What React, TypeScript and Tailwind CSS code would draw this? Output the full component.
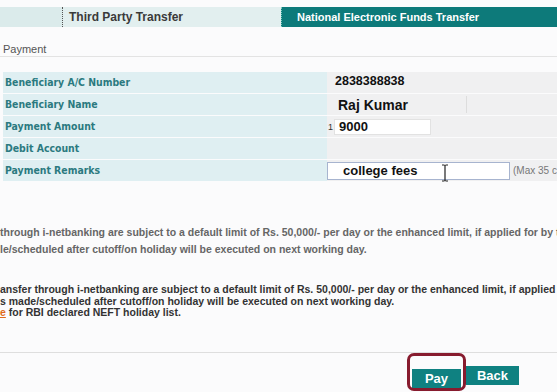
import React from "react";

const rows = [
  "Beneficiary A/C Number",
  "Beneficiary Name",
  "Payment Amount",
  "Debit Account",
  "Payment Remarks",
];

function Value({ index }: { index: number }) {
  if (index === 0)
    return (
      <div className="h-full flex items-center pl-[8px]">
        <span className="text-[12.5px] font-bold text-[#111] leading-none -mt-[2px]">2838388838</span>
      </div>
    );
  if (index === 1)
    return (
      <div className="h-full flex items-center pl-[11px]">
        <div className="w-[129px] h-[17px] flex items-center border-r border-[#dddddd]">
          <span className="text-[14px] font-bold text-[#111] leading-none">Raj Kumar</span>
        </div>
      </div>
    );
  if (index === 2)
    return (
      <div className="h-full flex items-center pl-[1px] gap-[1px]">
        <span className="text-[9px] text-[#333] mt-[3px]">1</span>
        <div className="w-[97px] h-[16px] bg-white border border-[#e2e2e2] flex items-center pl-[4px]">
          <span className="text-[13px] font-bold text-[#111] leading-none">9000</span>
        </div>
      </div>
    );
  if (index === 4)
    return (
      <div className="h-full flex items-center gap-[3px] relative">
        <div className="w-[183px] h-[18px] bg-white border border-[#a7b4cf] flex items-center pl-[15px]">
          <span className="text-[13px] font-bold text-[#111] leading-none">college fees</span>
        </div>
        <span className="text-[10px] text-[#777] whitespace-nowrap">(Max 35 c</span>
        <svg className="absolute left-[113px] top-[4px]" width="10" height="18" viewBox="0 0 10 18">
          <path d="M2 1h2.5M5.5 1H8M5 1v16M2 17h2.5M5.5 17H8" stroke="#222" strokeWidth="1.2" fill="none" />
        </svg>
      </div>
    );
  return <div className="h-full" />;
}

export default function App() {
  return (
    <div className="w-[557px] h-[392px] bg-[#fbfbfc] overflow-hidden font-['Liberation_Sans',Arial,sans-serif]">
      {/* tabs */}
      <div className="mt-[7px] h-[20px] flex">
        <div className="w-[63px] bg-[#dbebeb] border-r border-dotted border-[#555]" />
        <div className="flex-1 bg-[#e2efef] flex items-center pl-[6px]">
          <span className="text-[12px] font-bold text-[#3a3a3a]">Third Party Transfer</span>
        </div>
        <div className="w-[276px] bg-[#0d7a7a] border-l border-dotted border-[#cfe]/60 flex items-center pl-[15px]">
          <span className="text-[11px] font-bold text-white">National Electronic Funds Transfer</span>
        </div>
      </div>

      {/* section header */}
      <div className="mt-[16px] h-[14px] border-b border-[#e3e3e3] pl-[3px] flex items-start">
        <span className="text-[11px] text-[#555] leading-none mt-[1px]">Payment</span>
      </div>

      {/* form rows */}
      <div className="mt-[15px] pl-[3px] flex flex-col gap-[1px]">
        {rows.map((label, i) => (
          <div key={label} className="grid grid-cols-[324px_1fr] h-[21px]">
            <div className="bg-[#dfeff2] flex items-center pl-[2px]">
              <span className="font-['DejaVu_Sans_Condensed','DejaVu_Sans',sans-serif] font-bold text-[10.4px] text-[#2b7a80]">
                {label}
              </span>
            </div>
            <div className="bg-[#f0f0f1]">
              <Value index={i} />
            </div>
          </div>
        ))}
      </div>

      {/* notes */}
      <div className="mt-[43px] text-[10.5px] font-bold text-[#666] whitespace-nowrap leading-[17px]">
        <p> through i-netbanking are subject to a default limit of Rs. 50,000/- per day or the enhanced limit, if applied for by the</p>
        <p>le/scheduled after cutoff/on holiday will be executed on next working day.</p>
      </div>

      <div className="mt-[26px] text-[10.5px] font-bold text-[#333] whitespace-nowrap leading-[11.5px]">
        <p>ansfer through i-netbanking are subject to a default limit of Rs. 50,000/- per day or the enhanced limit, if applied for by</p>
        <p>s made/scheduled after cutoff/on holiday will be executed on next working day.</p>
        <p>
          <span className="text-[#e06a1b] underline">e</span> for RBI declared NEFT holiday list.
        </p>
      </div>

      {/* actions */}
      <div className="mt-[33px] border-t border-[#dedede] flex justify-end pr-[38px] pt-[13px] gap-[5px]">
        <div className="relative">
          <div className="absolute -left-[5px] -top-[13px] w-[59px] h-[38px] rounded-[7px] border-[3px] border-[#871b2e]" />
          <button className="w-[49px] h-[19px] bg-[#0f8181] text-white text-[13px] font-bold leading-none">Pay</button>
        </div>
        <button className="w-[53px] h-[19px] bg-[#0f8181] text-white text-[13px] font-bold leading-none">Back</button>
      </div>
    </div>
  );
}
